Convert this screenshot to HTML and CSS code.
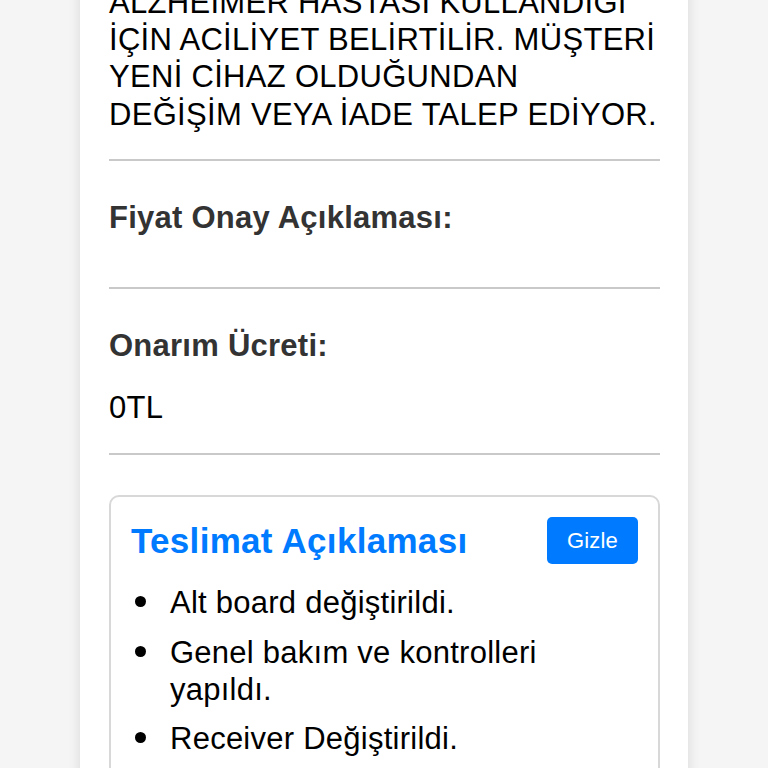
FILE: index.html
```html
<!DOCTYPE html>
<html lang="tr">
<head>
<meta charset="utf-8">
<title>Servis Detayı</title>
<link rel="stylesheet" href="styles.css">
</head>
<body>
<main class="card">
  <section class="field field-first">
    <p class="value upper">ALZHEIMER HASTASI KULLANDIĞI<br>İÇİN ACİLİYET BELİRTİLİR. MÜŞTERİ<br>YENİ CİHAZ OLDUĞUNDAN<br>DEĞİŞİM VEYA İADE TALEP EDİYOR.</p>
  </section>
  <section class="field">
    <h3 class="label">Fiyat Onay Açıklaması:</h3>
    <p class="value"></p>
  </section>
  <section class="field field-last">
    <h3 class="label">Onarım Ücreti:</h3>
    <p class="value">0TL</p>
  </section>
  <section class="notes">
    <div class="notes-head">
      <h2 class="notes-title">Teslimat Açıklaması</h2>
      <button class="btn" type="button">Gizle</button>
    </div>
    <ul class="notes-list">
      <li>Alt board değiştirildi.</li>
      <li>Genel bakım ve kontrolleri yapıldı.</li>
      <li>Receiver Değiştirildi.</li>
    </ul>
  </section>
</main>
</body>
</html>
```

FILE: styles.css
```css
html, body {
  margin: 0;
  padding: 0;
}

body {
  background: #f5f5f5;
  font-family: "Liberation Sans", Arial, Helvetica, sans-serif;
  color: #000;
  overflow: hidden;
}

.card {
  width: 608px;
  box-sizing: border-box;
  margin: -16px auto 0;
  padding: 0 28px 40px 29px;
  background: #fff;
  box-shadow: 0 0 12px rgba(0, 0, 0, 0.12);
  min-height: 900px;
  letter-spacing: 0.25px;
}

.field {
  padding: 38px 0 26px;
  border-bottom: 2px solid #c9c9c9;
}

.field-first {
  padding-top: 0;
}

.field-last {
  padding-bottom: 27px;
}

.upper {
  line-height: 37.6px;
  letter-spacing: 0.3px;
}

.label {
  margin: 0 0 25px;
  font-size: 31px;
  line-height: 1.2;
  font-weight: bold;
  color: #333;
}

.value {
  margin: 0;
  font-size: 31px;
  line-height: 1.2;
  color: #000;
}

.notes {
  margin-top: 40px;
  border: 2px solid #d8d8d8;
  border-radius: 10px;
  padding: 20px;
}

.notes-head {
  display: flex;
  align-items: center;
  justify-content: space-between;
}

.notes-title {
  margin: 0;
  font-size: 35px;
  line-height: 1.2;
  font-weight: bold;
  color: #007bff;
  letter-spacing: 0.3px;
}

.btn {
  font-family: "Liberation Sans", Arial, Helvetica, sans-serif;
  font-size: 22px;
  line-height: 27px;
  padding: 10px 20px;
  border: none;
  border-radius: 5px;
  background: #007bff;
  color: #fff;
  letter-spacing: 0.2px;
}

.notes-list {
  margin: 20px 0 0;
  padding-left: 39px;
  font-size: 31px;
  line-height: 1.2;
  list-style: none;
}

.notes-list li {
  position: relative;
}

.notes-list li::before {
  content: "";
  position: absolute;
  left: -35px;
  top: 12px;
  width: 11px;
  height: 11px;
  border-radius: 50%;
  background: #000;
}

.notes-list li + li {
  margin-top: 12px;
}
```
